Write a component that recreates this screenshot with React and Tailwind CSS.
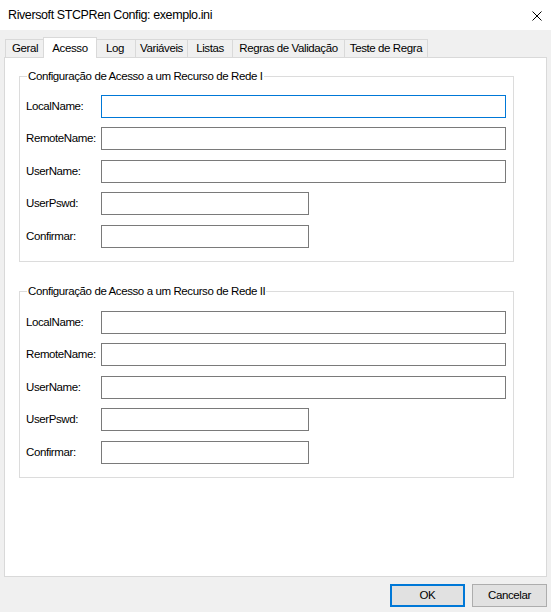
import React from 'react';

const tabs = [
  { label: 'Geral', w: 'w-[40px]' },
  { label: 'Acesso', w: 'w-[54px]', active: true },
  { label: 'Log', w: 'w-[41px]' },
  { label: 'Variáveis', w: 'w-[52px]' },
  { label: 'Listas', w: 'w-[45px]' },
  { label: 'Regras de Validação', w: 'w-[112px]' },
  { label: 'Teste de Regra', w: 'w-[83px]' },
];

const fields = [
  { label: 'LocalName:', long: true, mt: 'mt-0' },
  { label: 'RemoteName:', long: true, mt: 'mt-[9px]' },
  { label: 'UserName:', long: true, mt: 'mt-[10px]' },
  { label: 'UserPswd:', long: false, mt: 'mt-[9px]' },
  { label: 'Confirmar:', long: false, mt: 'mt-[10px]' },
];

function Group({ title, focusFirst, className }) {
  return (
    <fieldset className={`w-[495px] ml-[14px] border border-[#dcdcdc] px-[6px] pb-[13px] ${className}`}>
      <legend className="ml-[1px] px-[1px] leading-[16px]">{title}</legend>
      {fields.map((f, i) => (
        <div key={f.label} className={`flex items-center h-[23px] ${f.mt}`}>
          <label className="w-[75px] shrink-0">{f.label}</label>
          <input
            type={f.label === 'UserPswd:' || f.label === 'Confirmar:' ? 'password' : 'text'}
            className={`h-[23px] bg-white border outline-none ${f.long ? 'w-[405px]' : 'w-[208px]'} ${
              focusFirst && i === 0 ? 'border-[#0078d7]' : 'border-[#7a7a7a]'
            }`}
          />
        </div>
      ))}
    </fieldset>
  );
}

export default function App() {
  return (
    <div
      className="w-[551px] h-[612px] bg-[#f0f0f0] text-black text-[11.5px] tracking-[-0.4px] overflow-hidden"
      style={{ fontFamily: '"Liberation Sans", Arial, sans-serif' }}
    >
      {/* title bar */}
      <div className="h-[30px] bg-white flex items-center justify-between pl-[8px] pr-[9px]">
        <span className="text-[12.5px] tracking-[-0.4px]">Riversoft STCPRen Config: exemplo.ini</span>
        <svg width="10" height="10" viewBox="0 0 10 10" className="mt-[1px]">
          <path d="M0.5 0.5 L9.5 9.5 M9.5 0.5 L0.5 9.5" stroke="#000" strokeWidth="1" fill="none" />
        </svg>
      </div>

      {/* tab strip */}
      <div className="h-[27px] pl-[5px] flex items-end">
        {tabs.map((t) =>
          t.active ? (
            <div
              key={t.label}
              className={`${t.w} h-[21px] -ml-[2px] -mr-[2px] -mb-[1px] relative z-10 bg-white border border-b-0 border-[#d9d9d9] flex justify-center pt-[2px]`}
            >
              {t.label}
            </div>
          ) : (
            <div
              key={t.label}
              className={`${t.w} h-[18px] border border-b-0 border-l-0 first:border-l border-[#d9d9d9] bg-[#f0f0f0] flex justify-center items-center pt-[1px]`}
            >
              {t.label}
            </div>
          )
        )}
      </div>

      {/* panel */}
      <div className="mx-[4px] h-[520px] bg-white border border-[#d9d9d9] relative">
        <Group title="Configuração de Acesso a um Recurso de Rede I" focusFirst className="mt-[10px] pt-[11px]" />
        <Group title="Configuração de Acesso a um Recurso de Rede II" className="mt-[21px] pt-[12px]" />
      </div>

      {/* buttons */}
      <div className="flex justify-end gap-[7px] pr-[4px] mt-[7px]">
        <button className="w-[75px] h-[23px] bg-[#e1e1e1] border-2 border-[#0078d7]">OK</button>
        <button className="w-[75px] h-[23px] bg-[#e1e1e1] border border-[#adadad]">Cancelar</button>
      </div>
    </div>
  );
}
